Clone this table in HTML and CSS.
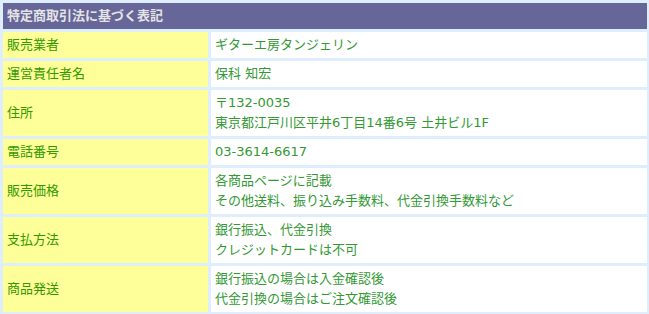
FILE: index.html
```html
<!DOCTYPE html>
<html lang="ja">
<head>
<meta charset="utf-8">
<title>特定商取引法に基づく表記</title>
<link rel="stylesheet" href="styles.css">
</head>
<body>
<table class="law">
  <colgroup><col class="col-label"><col class="col-value"></colgroup>
  <tr><th class="head" colspan="2">特定商取引法に基づく表記</th></tr>
  <tr><td class="label">販売業者</td><td class="value">ギターエ房タンジェリン</td></tr>
  <tr><td class="label">運営責任者名</td><td class="value">保科 知宏</td></tr>
  <tr><td class="label">住所</td><td class="value">〒132-0035<br>東京都江戸川区平井6丁目14番6号 土井ビル1F</td></tr>
  <tr><td class="label">電話番号</td><td class="value">03-3614-6617</td></tr>
  <tr><td class="label">販売価格</td><td class="value">各商品ページに記載<br>その他送料、振り込み手数料、代金引換手数料など</td></tr>
  <tr><td class="label">支払方法</td><td class="value">銀行振込、代金引換<br>クレジットカードは不可</td></tr>
  <tr><td class="label">商品発送</td><td class="value">銀行振込の場合は入金確認後<br>代金引換の場合はご注文確認後</td></tr>
</table>
</body>
</html>
```
FILE: styles.css
```css
html, body {
  margin: 0;
  padding: 0;
  background: #deeefc;
  overflow: hidden;
}
body {
  font-family: "DejaVu Sans", "Noto Sans CJK JP", sans-serif;
  font-size: 13px;
  line-height: 20px;
}
.law {
  width: 650px;
  border-collapse: separate;
  border-spacing: 3px;
  table-layout: fixed;
}
.col-label {
  width: 205px;
}
.law td, .law th {
  padding: 3px 4px;
  vertical-align: middle;
  text-align: left;
}
.head {
  background: #666699;
  color: #e4e4e4;
  font-weight: bold;
}
.label {
  background: #ffff99;
  color: #339900;
}
.value {
  background: #ffffff;
  color: #339933;
  padding-left: 3px;
}
```
